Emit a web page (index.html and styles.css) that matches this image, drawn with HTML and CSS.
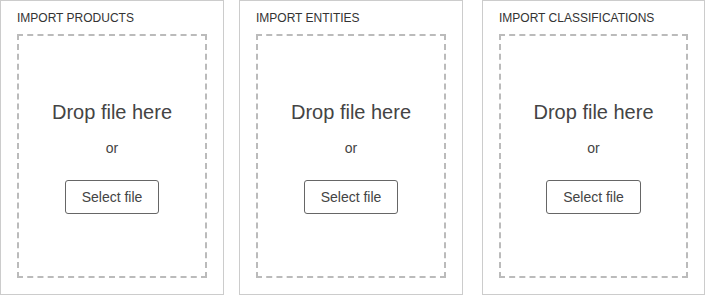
FILE: index.html
```html
<!DOCTYPE html>
<html lang="en">
<head>
    <meta charset="UTF-8">
    <meta name="viewport" content="width=device-width, initial-scale=1.0">
    <title>Import</title>
    <link rel="stylesheet" href="styles.css">
</head>
<body>
    <div class="imports">
        <div class="import-panel">
            <h3 class="import-title">IMPORT PRODUCTS</h3>
            <div class="drop-zone">
                <p class="drop-text">Drop file here</p>
                <p class="drop-or">or</p>
                <button class="select-btn">Select file</button>
            </div>
        </div>

        <div class="import-panel">
            <h3 class="import-title">IMPORT ENTITIES</h3>
            <div class="drop-zone">
                <p class="drop-text">Drop file here</p>
                <p class="drop-or">or</p>
                <button class="select-btn">Select file</button>
            </div>
        </div>

        <div class="import-panel">
            <h3 class="import-title">IMPORT CLASSIFICATIONS</h3>
            <div class="drop-zone">
                <p class="drop-text">Drop file here</p>
                <p class="drop-or">or</p>
                <button class="select-btn">Select file</button>
            </div>
        </div>
    </div>
</body>
</html>
```

FILE: styles.css
```css
* {
    margin: 0;
    padding: 0;
    box-sizing: border-box;
    font-family: 'Liberation Sans', Arial, sans-serif;
}

:root {
    --text: #333333;
    --panel-border: #cccccc;
    --dash: #bbbbbb;
    --white: #ffffff;
}

body {
    background: var(--white);
    color: var(--text);
}

.imports {
    display: flex;
    width: 705px;
}

.import-panel {
    width: 224px;
    height: 295px;
    border: 1px solid var(--panel-border);
    padding: 10px 16px 16px;
    display: flex;
    flex-direction: column;
}

.import-panel:nth-child(2) {
    margin-left: 15px;
}

.import-panel:nth-child(3) {
    width: 223px;
    margin-left: 19px;
}

.import-title {
    font-size: 12px;
    line-height: 14px;
    font-weight: 400;
    color: var(--text);
    margin-bottom: 9px;
}

.drop-zone {
    flex: 1;
    border: 2px dashed var(--dash);
    padding-top: 65px;
    display: flex;
    flex-direction: column;
    align-items: center;
}

.drop-text {
    font-size: 20px;
    line-height: 23px;
    color: #444444;
}

.drop-or {
    font-size: 14px;
    line-height: 16px;
    color: #444444;
    margin-top: 16px;
}

.select-btn {
    margin-top: 24px;
    background: var(--white);
    border: 1px solid #666666;
    border-radius: 3px;
    padding: 8px 16px;
    font-size: 14px;
    line-height: 16px;
    color: #444444;
    cursor: pointer;
}
```
